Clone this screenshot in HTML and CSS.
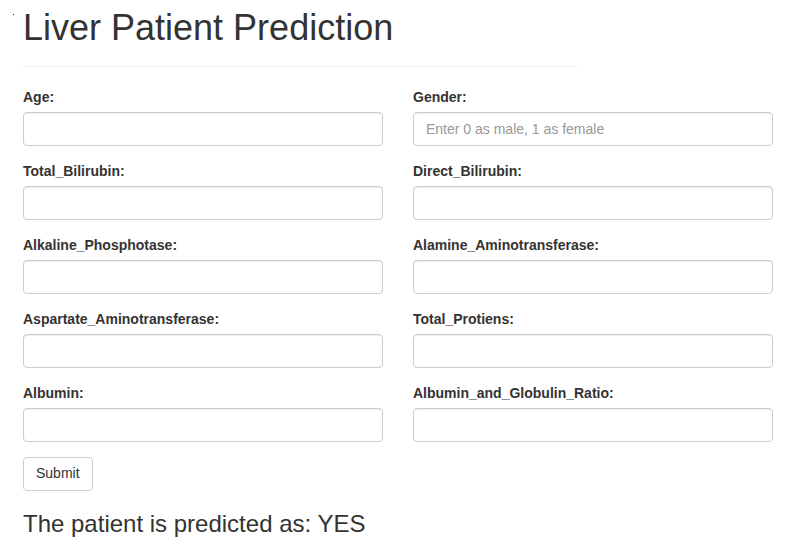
FILE: index.html
```html
<!DOCTYPE html>
<html>
<head>
<meta charset="utf-8">
<link rel="stylesheet" href="styles.css">
</head>
<body>
<span class="dot"></span>
<div class="page">
  <div class="page-header">
    <h1 class="title">Liver Patient Prediction</h1>
  </div>
  <form class="form">
    <div class="grid">
      <div class="group"><label class="label">Age:</label><input class="input" type="text"></div>
      <div class="group"><label class="label">Gender:</label><input class="input" type="text" placeholder="Enter 0 as male, 1 as female"></div>
      <div class="group"><label class="label">Total_Bilirubin:</label><input class="input" type="text"></div>
      <div class="group"><label class="label">Direct_Bilirubin:</label><input class="input" type="text"></div>
      <div class="group"><label class="label">Alkaline_Phosphotase:</label><input class="input" type="text"></div>
      <div class="group"><label class="label">Alamine_Aminotransferase:</label><input class="input" type="text"></div>
      <div class="group"><label class="label">Aspartate_Aminotransferase:</label><input class="input" type="text"></div>
      <div class="group"><label class="label">Total_Protiens:</label><input class="input" type="text"></div>
      <div class="group"><label class="label">Albumin:</label><input class="input" type="text"></div>
      <div class="group"><label class="label">Albumin_and_Globulin_Ratio:</label><input class="input" type="text"></div>
    </div>
    <button class="btn" type="button">Submit</button>
  </form>
  <h3 class="result">The patient is predicted as: YES</h3>
</div>
</body>
</html>
```
FILE: styles.css
```css
html, body {
  margin: 0;
  padding: 0;
  background: #fff;
}
body {
  font-family: "Liberation Sans", Arial, sans-serif;
  font-size: 14px;
  line-height: 1.42857;
  color: #333;
  position: relative;
}
.dot {
  position: absolute;
  left: 13px;
  top: 14px;
  width: 1px;
  height: 1px;
  background: #2a2ad0;
}
.page {
  padding: 8px 0 0 23px;
}
.page-header {
  width: 555px;
  padding-bottom: 8px;
  border-bottom: 1px solid #eee;
  margin-bottom: 20px;
}
.title {
  margin: 0 0 10px 0;
  font-size: 36px;
  font-weight: 500;
  line-height: 1.1;
  color: #333;
}
.grid {
  display: grid;
  grid-template-columns: 360px 360px;
  column-gap: 30px;
}
.group {
  display: flex;
  flex-direction: column;
  margin-bottom: 15px;
}
.label {
  font-weight: 700;
  margin-bottom: 5px;
  line-height: 20px;
  height: 20px;
}
.input {
  box-sizing: border-box;
  height: 34px;
  width: 100%;
  padding: 6px 12px;
  font-family: "Liberation Sans", Arial, sans-serif;
  font-size: 14px;
  color: #555;
  background: #fff;
  border: 1px solid #ccc;
  border-radius: 4px;
  box-shadow: inset 0 1px 1px rgba(0,0,0,0.075);
  margin: 0;
}
.input::placeholder {
  color: #999;
}
.btn {
  display: block;
  box-sizing: border-box;
  height: 34px;
  padding: 6px 12px;
  font-family: "Liberation Sans", Arial, sans-serif;
  font-size: 14px;
  line-height: 1.42857;
  color: #333;
  background: #fff;
  border: 1px solid #ccc;
  border-radius: 4px;
  margin: 0;
}
.result {
  margin: 20px 0 10px 0;
  font-size: 24px;
  font-weight: 500;
  line-height: 1.1;
  color: #333;
}
```
